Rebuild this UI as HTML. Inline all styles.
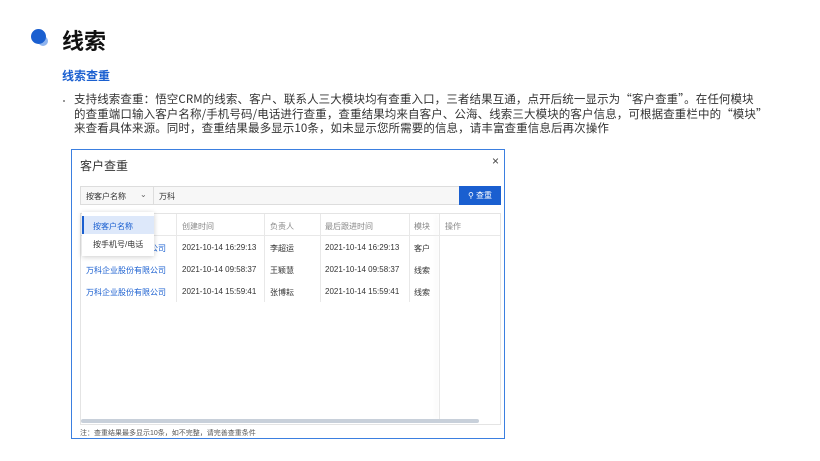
<!DOCTYPE html><html><head><meta charset="utf-8"><style>
*{margin:0;padding:0;box-sizing:border-box}
body{width:820px;height:461px;background:#fff;font-family:"Liberation Sans","Noto Sans CJK SC",sans-serif;position:relative;overflow:hidden;color:#222}
.a{position:absolute;white-space:nowrap}
.t{font-size:11.5px;color:#333;font-family:"Noto Sans CJK SC",sans-serif;letter-spacing:0.1px}
.c{font-size:8px;color:#333}
.h{font-size:8px;color:#888}
.l{font-size:8px;color:#1a5fd0}
.vl{position:absolute;width:1px;background:#e8e8e8}
</style></head><body>
<div class="a" style="left:31px;top:29px;width:15px;height:15px;border-radius:50%;background:#1a5fd0"></div>
<div class="a" style="left:38px;top:36px;width:10px;height:10px;border-radius:50%;background:#8fb4ee;z-index:-1"></div>
<div class="a" style="left:62px;top:24px;font-size:22px;font-weight:bold;color:#111">线索</div>
<div class="a" style="left:62px;top:67px;font-size:12px;font-weight:bold;color:#1a5fd0">线索查重</div>
<div class="a" style="left:63px;top:100px;width:2px;height:2px;background:#999"></div>
<div class="a t" style="left:74px;top:92px;line-height:14.5px">支持线索查重：悟空CRM的线索、客户、联系人三大模块均有查重入口，三者结果互通，点开后统一显示为“客户查重”。在任何模块<br>的查重端口输入客户名称/手机号码/电话进行查重，查重结果均来自客户、公海、线索三大模块的客户信息，可根据查重栏中的“模块”<br>来查看具体来源。同时，查重结果最多显示10条，如未显示您所需要的信息，请丰富查重信息后再次操作</div>
<div class="a" style="left:71px;top:149px;width:434px;height:290px;border:1px solid #3b7fe0;background:#fff">
 <div class="a" style="left:8px;top:7px;font-size:12px;color:#333">客户查重</div>
 <div class="a" style="left:420px;top:4px;font-size:12px;color:#444">×</div>
 <div class="a" style="left:8px;top:36px;width:420px;height:19px;border:1px solid #ddd;background:#f7f7f7"></div>
 <div class="a c" style="left:14px;top:41px">按客户名称</div>
 <div class="a c" style="left:68px;top:40px;color:#666">⌄</div>
 <div class="a" style="left:81px;top:37px;width:1px;height:17px;background:#ddd"></div>
 <div class="a c" style="left:87px;top:41px">万科</div>
 <div class="a" style="left:387px;top:36px;width:42px;height:19px;background:#1a5fd0;color:#fff;font-size:8px;line-height:19px;text-align:center">&#9906; 查重</div>
 <div class="a" style="left:8px;top:63px;width:421px;height:212px;border:1px solid #e4e4e4"></div>
 <div class="a" style="left:9px;top:85px;width:419px;height:1px;background:#e8e8e8"></div>
 <div class="vl" style="left:104px;top:64px;height:88px"></div>
 <div class="vl" style="left:192px;top:64px;height:88px"></div>
 <div class="vl" style="left:248px;top:64px;height:88px"></div>
 <div class="vl" style="left:337px;top:64px;height:88px"></div>
 <div class="vl" style="left:367px;top:64px;height:206px;box-shadow:-3px 0 4px #eee"></div>
 <div class="a h" style="left:110px;top:71px">创建时间</div>
 <div class="a h" style="left:198px;top:71px">负责人</div>
 <div class="a h" style="left:253px;top:71px">最后跟进时间</div>
 <div class="a h" style="left:342px;top:71px">模块</div>
 <div class="a h" style="left:373px;top:71px">操作</div>
 <div class="a l" style="left:14px;top:93px">万科企业股份有限公司</div>
 <div class="a c" style="left:110px;top:93px">2021-10-14 16:29:13</div><div class="a c" style="left:198px;top:93px">李超运</div><div class="a c" style="left:253px;top:93px">2021-10-14 16:29:13</div><div class="a c" style="left:342px;top:93px">客户</div>
 <div class="a l" style="left:14px;top:115px">万科企业股份有限公司</div>
 <div class="a c" style="left:110px;top:115px">2021-10-14 09:58:37</div><div class="a c" style="left:198px;top:115px">王颖慧</div><div class="a c" style="left:253px;top:115px">2021-10-14 09:58:37</div><div class="a c" style="left:342px;top:115px">线索</div>
 <div class="a l" style="left:14px;top:137px">万科企业股份有限公司</div>
 <div class="a c" style="left:110px;top:137px">2021-10-14 15:59:41</div><div class="a c" style="left:198px;top:137px">张博耘</div><div class="a c" style="left:253px;top:137px">2021-10-14 15:59:41</div><div class="a c" style="left:342px;top:137px">线索</div>
 <div class="a" style="left:9px;top:269px;width:398px;height:4px;background:#c8d0da;border-radius:2px"></div>
 <div class="a" style="left:10px;top:62px;width:72px;height:44px;background:#fff;box-shadow:0 1px 5px rgba(0,0,0,.2)">
  <div class="a" style="left:0;top:4px;width:72px;height:18px;background:#dde8fa;border-left:2px solid #1a5fd0"></div>
  <div class="a c" style="left:11px;top:9px;color:#1a5fd0">按客户名称</div>
  <div class="a c" style="left:11px;top:27px">按手机号/电话</div>
 </div>
 <div class="a" style="left:8px;top:278px;font-size:7px;color:#555">注：查重结果最多显示10条，如不完整，请完善查重条件</div>
</div>
</body></html>
